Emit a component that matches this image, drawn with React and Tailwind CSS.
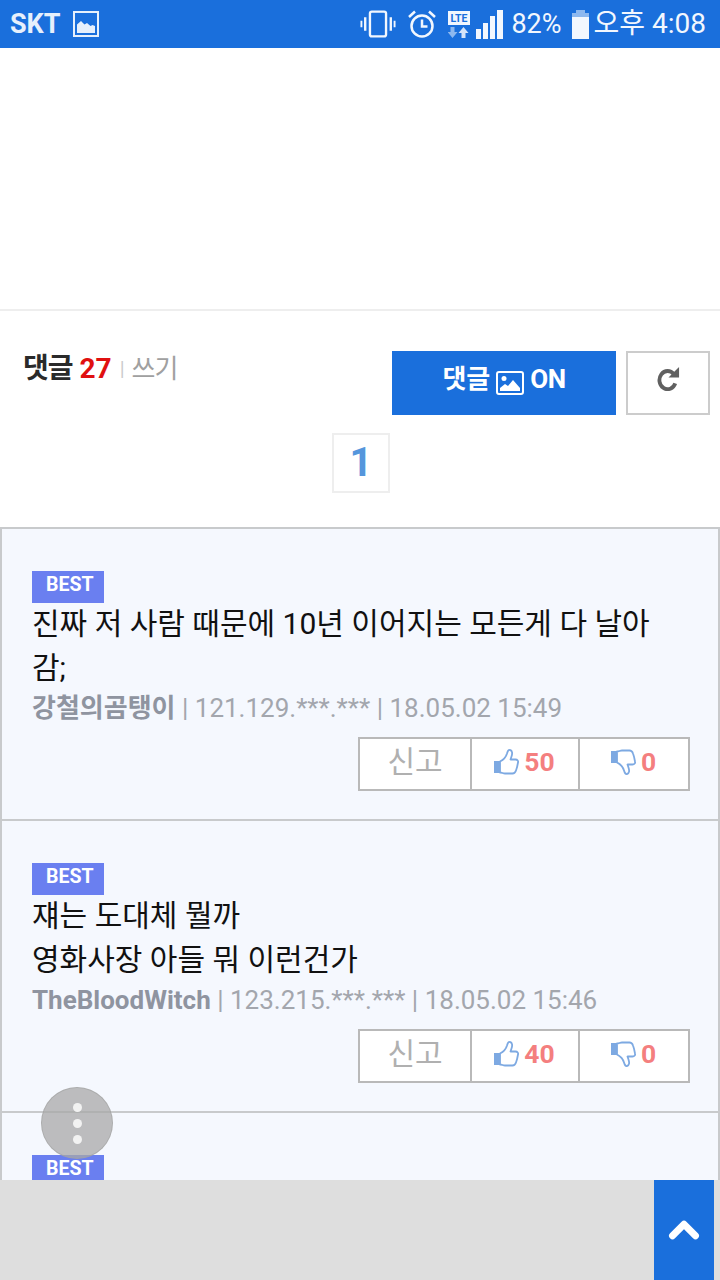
import React from 'react';
import { ChevronUp } from 'lucide-react';

const font = "font-['Roboto','Noto_Sans_CJK_KR',sans-serif]";

const PictureIcon = ({ className }) => (
    <svg viewBox="0 0 26 26" className={className} fill="none">
        <rect x="1" y="1" width="24" height="24" stroke="currentColor" strokeWidth="2" />
        <path d="M4 22V13.500L8 10l3.500 3.500 2.500-1.500 3.500 3 2-1 2.500 1V22Z" fill="currentColor" />
    </svg>
);

const WideIcon = () => (
    <svg viewBox="0 0 28 24" className="w-[28px] h-[24px] mt-[6px]" fill="none">
        <rect x="1" y="1" width="26" height="22" rx="2" stroke="currentColor" strokeWidth="2" />
        <circle cx="8" cy="7.500" r="2.500" fill="currentColor" />
        <path d="M4 20v-3l5-4 3 2 5-6 7 8v3Z" fill="currentColor" />
    </svg>
);

const ThumbUp = ({ down }) => (
    <svg viewBox="0 0 26 28" className={`w-[26px] h-[28px] ${down ? 'rotate-180 -scale-x-100' : ''}`} fill="none">
        <rect x="1" y="13" width="6" height="12" fill="#7da9e2" />
        <path d="M7 13.500c3-1.500 6-4.500 7-8 .5-2 1-4 3-3.500 2.500.5 2.500 3.500 1.500 6.500l-1 3h5c2 0 3 1.500 2.500 3-.5 3-1 5.500-2 8-.5 1.500-1.500 3-3.500 3H12c-2 0-3-1-5-1Z" stroke="#7da9e2" strokeWidth="1.800" strokeLinejoin="round" />
    </svg>
);

const Comment = ({ lines, nick, ip, date, up }) => (
    <div className="border-2 border-b-0 border-[#c8cacc] bg-[#f5f8fe] h-[292px] pt-[42px] pl-[30px] pr-[28px]">
        <div className="w-[72px] h-[32px] bg-[#6a7ff0] text-white text-[19.500px] leading-[27px] font-bold pl-[14px]">BEST</div>
        <div className="-mt-[1px] text-[30px] leading-[44px] text-[#111]">
            {lines.map((l) => <div key={l}>{l}</div>)}
        </div>
        <div className="text-[26px] leading-[38px] text-[#a3a6ad] -mt-[1px] whitespace-nowrap">
            <span className="font-bold text-[#8f94a0]">{nick}</span> | {ip} | {date}
        </div>
        <div className="flex justify-end mt-[10px]">
            <div className="flex h-[54px] w-[332px] border-2 border-[#b9b9b9] bg-white">
                <div className="w-[112px] border-r-2 border-[#b9b9b9] flex items-center justify-center text-[30px] text-[#b0b0b0] pb-[6px]">신고</div>
                <div className="w-[108px] border-r-2 border-[#b9b9b9] flex items-center justify-center gap-[5px] text-[26.500px] font-bold text-[#f47f7f] pb-[4px] pr-[2px]">
                    <ThumbUp />{up}
                </div>
                <div className="flex-1 flex items-center justify-center gap-[5px] text-[26.500px] font-bold text-[#f47f7f] pb-[4px] pr-[2px]">
                    <ThumbUp down />0
                </div>
            </div>
        </div>
    </div>
);

const App = () => {
    return (
        <div className={`relative w-[720px] h-[1280px] overflow-hidden bg-white ${font}`}>
            {/* status bar */}
            <div className="h-[48px] bg-[#1a6fdc] text-white flex items-center pl-[10px] pr-[14px]">
                <span className="text-[27px] font-bold text-[#e6f0fc]">SKT</span>
                <PictureIcon className="w-[26px] h-[26px] ml-[12px] text-[#e6f0fc]" />
                <div className="ml-auto flex items-center text-[#f2f7fe]">
                    <svg viewBox="0 0 38 30" className="w-[36px] h-[30px]" fill="none" stroke="currentColor">
                        <rect x="10.500" y="2" width="17" height="26" rx="2" strokeWidth="2.500" />
                        <path d="M5.500 8v14M32.500 8v14" strokeWidth="2.500" />
                        <path d="M1.500 11.500v7M36.500 11.500v7" strokeWidth="2" />
                    </svg>
                    <svg viewBox="0 0 30 30" className="w-[30px] h-[30px] ml-[11px]" fill="none" stroke="currentColor" strokeWidth="2.500">
                        <circle cx="15" cy="17" r="10.500" />
                        <path d="M15 10.500v7h5.500M2 8l6-5.500M28 8l-6-5.500" />
                    </svg>
                    <svg viewBox="0 0 22 28" className="w-[22px] h-[28px] ml-[11px]">
                        <rect x="0" y="1" width="22" height="14" fill="#f2f7fe" />
                        <text x="11" y="12" textAnchor="middle" fontSize="10.500" fontWeight="700" fill="#1a6fdc">LTE</text>
                        <path d="M2.500 17h4v5h3l-5 6-5-6h3Z" fill="#8db8ef" />
                        <path d="M15.500 17l5 6h-3v5h-4v-5h-3Z" fill="#d5e4f9" />
                    </svg>
                    <div className="flex items-end gap-[2px] h-[30px] ml-[6px]">
                        <div className="w-[5px] h-[10px] bg-current" />
                        <div className="w-[5px] h-[16px] bg-current" />
                        <div className="w-[5px] h-[23px] bg-current" />
                        <div className="w-[6px] h-[29px] bg-current" />
                    </div>
                    <span className="text-[27px] ml-[8px]">82%</span>
                    <div className="ml-[10px] w-[17px] h-[29px] flex flex-col items-center">
                        <div className="w-[9px] h-[3px] bg-[#8db8ef]" />
                        <div className="w-[17px] h-[4px] bg-[#8db8ef]" />
                        <div className="w-[17px] flex-1 bg-current" />
                    </div>
                    <span className="text-[28px] ml-[5px] whitespace-nowrap">오후 4:08</span>
                </div>
            </div>

            {/* ad blank */}
            <div className="h-[263px] border-b-2 border-[#eeeeee]" />

            {/* comment header */}
            <div className="h-[216px] relative">
                <div className="flex justify-between pl-[23px] pr-[10px] pt-[40px]">
                    <div className="flex items-center h-[40px] -mt-[2px] whitespace-nowrap">
                        <span className="text-[28px] font-bold text-[#2a2a2a] tracking-[-1px]">댓글</span>
                        <span className="text-[28px] font-bold text-[#e01010] ml-[7px]">27</span>
                        <span className="text-[20px] text-[#cccccc] ml-[8px]">|</span>
                        <span className="text-[26px] text-[#a0a0a0] ml-[7px] tracking-[-1px]">쓰기</span>
                    </div>
                    <div className="flex gap-[10px]">
                        <div className="w-[224px] h-[64px] bg-[#1a6fdc] text-white flex items-center justify-center gap-[6px] text-[26px] font-bold whitespace-nowrap pb-[7px]">
                            댓글
                            <WideIcon />
                            <span className="tracking-[-0.5px]">ON</span>
                        </div>
                        <div className="w-[84px] h-[64px] border-2 border-[#cccccc] flex items-center justify-center text-[#606060]">
                            <svg viewBox="0 0 24 26" className="w-[23px] h-[25px] -mt-[9px]" fill="none" stroke="currentColor" strokeWidth="4">
                                <path d="M17.500 8.500A8.500 9.500 0 1 0 19 18" />
                                <path d="M23 1v11H12Z" fill="currentColor" stroke="none" />
                            </svg>
                        </div>
                    </div>
                </div>
                <div className="flex justify-center mt-[18px]">
                    <div className="w-[58px] h-[60px] ml-[2px] border-2 border-[#eeeeee] flex items-center justify-center text-[#5596dc] text-[40px] font-bold">1</div>
                </div>
            </div>

            {/* comments */}
            <Comment
                lines={['진짜 저 사람 때문에 10년 이어지는 모든게 다 날아', '감;']}
                nick="강철의곰탱이"
                ip="121.129.***.***"
                date="18.05.02 15:49"
                up="50"
            />
            <Comment
                lines={['쟤는 도대체 뭘까', '영화사장 아들 뭐 이런건가']}
                nick="TheBloodWitch"
                ip="123.215.***.***"
                date="18.05.02 15:46"
                up="40"
            />
            <Comment lines={['']} nick="" ip="" date="" up="" />

            {/* floating menu */}
            <div className="absolute left-[41px] top-[1087px] w-[72px] h-[72px] rounded-full bg-[#a8a8a8]/75 border border-[#a0a0a0]/60 flex flex-col items-center justify-center gap-[7px]">
                <div className="w-[9px] h-[9px] rounded-full bg-[#f2f2f2]" />
                <div className="w-[9px] h-[9px] rounded-full bg-[#f2f2f2]" />
                <div className="w-[9px] h-[9px] rounded-full bg-[#f2f2f2]" />
            </div>

            {/* bottom bar */}
            <div className="absolute left-0 right-0 bottom-0 h-[100px] bg-[#dedede] flex justify-end pr-[6px]">
                <div className="w-[60px] h-[100px] bg-[#1a6fdc] flex items-center justify-center text-white">
                    <ChevronUp size={46} strokeWidth={3.6} />
                </div>
            </div>
        </div>
    );
};

export default App;
